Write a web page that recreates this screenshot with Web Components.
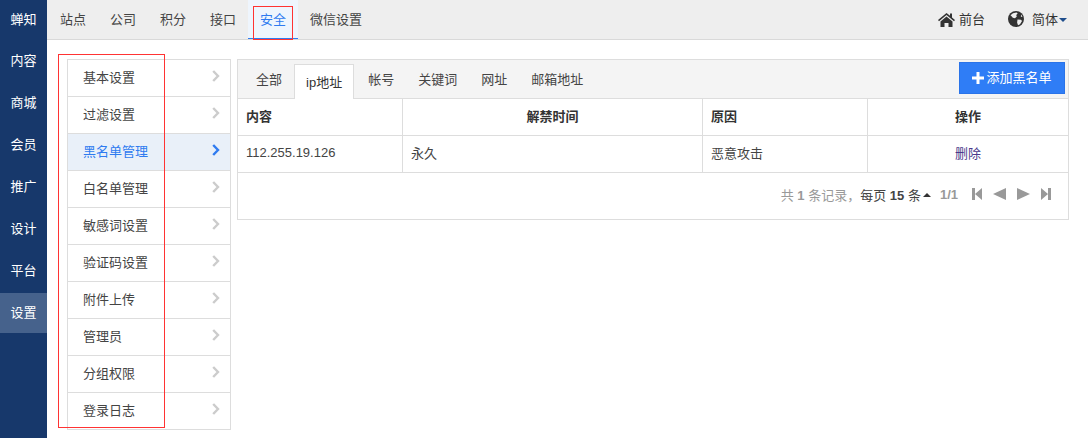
<!DOCTYPE html>
<html lang="zh">
<head>
<meta charset="utf-8">
<title>黑名单管理</title>
<style>
  html, body { margin: 0; height: 100%; }
  body {
    background: #fff;
    font-family: "Liberation Sans", "Noto Sans CJK SC", sans-serif;
    font-size: 13px;
    color: #444;
    overflow: hidden;
  }
  #app { display: flex; width: 1088px; height: 438px; position: relative; }
  #main { flex: 1; display: flex; flex-direction: column; min-width: 0; }
  #body { display: flex; gap: 6px; padding: 19px 19px 0 20px; align-items: flex-start; }
</style>
</head>
<body>
<div id="app">
  <side-bar active="设置">
    <side-item first>蝉知</side-item>
    <side-item>内容</side-item>
    <side-item>商城</side-item>
    <side-item>会员</side-item>
    <side-item>推广</side-item>
    <side-item>设计</side-item>
    <side-item>平台</side-item>
    <side-item active>设置</side-item>
  </side-bar>
  <div id="main">
    <top-bar></top-bar>
    <div id="body">
      <menu-list>
        <menu-row>基本设置</menu-row>
        <menu-row>过滤设置</menu-row>
        <menu-row active>黑名单管理</menu-row>
        <menu-row>白名单管理</menu-row>
        <menu-row>敏感词设置</menu-row>
        <menu-row>验证码设置</menu-row>
        <menu-row>附件上传</menu-row>
        <menu-row>管理员</menu-row>
        <menu-row>分组权限</menu-row>
        <menu-row>登录日志</menu-row>
      </menu-list>
      <black-panel></black-panel>
    </div>
  </div>
  <note-box style="left:253px;top:6px;width:38px;height:32px"></note-box>
  <note-box style="left:58px;top:54px;width:105px;height:372px"></note-box>
</div>

<template id="top-bar-tpl">
  <style>
    :host { display: flex; align-items: stretch; height: 39px; background: #eee; border-bottom: 1px solid #d9d9d9; padding-left: 1px; color: #444; }
    a { display: flex; align-items: center; justify-content: center; width: 50px; height: 39px; box-sizing: border-box; padding-bottom: 3px; }
    a.on { color: #2f7bf0; background: #eef5fd; border-bottom: 1px solid #2f7bf0; padding-bottom: 2px; }
    a.wide { width: 76px; }
    .right { margin-left: auto; display: flex; align-items: center; color: #333; padding-bottom: 3px; }
    .right span { display: flex; align-items: center; }
    .home { gap: 4px; margin-right: 23px; }
    .lang { gap: 8px; margin-right: 21px; }
    .caret { width: 0; height: 0; border: 4px solid transparent; border-top-color: #1f4e8c; border-bottom: 0; margin-left: 1px; margin-top: 3px; }
    svg { display: block; margin-top: 2px; }
  </style>
  <a>站点</a><a>公司</a><a>积分</a><a>接口</a><a class="on">安全</a><a class="wide">微信设置</a>
  <div class="right">
    <span class="home">
      <svg width="17" height="15" viewBox="0 0 17 15"><path fill="#333" d="M8.5 1 0 8l1 1.2L8.5 3 16 9.2 17 8l-3-2.5V1.5h-2v2.3L8.500 1zM2.500 9.500V15h4v-4h4v4h4V9.500L8.500 4.500z"/></svg>
      前台
    </span>
    <span class="lang">
      <svg width="16" height="16" viewBox="0 0 16 16"><circle cx="8" cy="8" r="8" fill="#333"/><path fill="#eee" d="M2.500 4.200 5 2.200l3.500-.8 1.200 1.200-1.500 1.500.6 1.400-1.800 1.800-2.200-.6-1-1.200zM9.500 8.500l3.500.2 1 1.300-2 3.200-2 1-.9-2.700zM13 3.500l1.500 2-1.600.6z"/></svg>
      <span>简体<i class="caret"></i></span>
    </span>
  </div>
</template>

<template id="black-panel-tpl">
  <style>
    :host { display: block; width: 832px; height: 161px; box-sizing: border-box; border: 1px solid #ddd; background: #fff; }
    .tabs { display: flex; height: 39px; box-sizing: border-box; background: #f4f4f4; border-bottom: 1px solid #ddd; padding: 4px 3px 0 0; align-items: flex-start; }
    .tab { padding: 0 12px 6px; height: 34px; box-sizing: border-box; display: flex; align-items: center; color: #444; }
    .tab:first-child { padding-left: 18px; }
    .tab.on { height: 35px; background: #fff; border: 1px solid #ddd; border-bottom: 0; padding: 0 11px 2px; color: #333; margin-right: 2px; }
    .add { margin-left: auto; margin-top: -2px; width: 106px; height: 32px; box-sizing: border-box; background: #2f7df6; border: 1px solid #2a73e8; color: #fff; display: flex; align-items: center; justify-content: center; gap: 2px; padding-bottom: 3px; }
    .add svg { margin-top: 2px; }
    table { width: 830px; border-collapse: separate; border-spacing: 0; table-layout: fixed; }
    th, td { height: 37px; padding: 0 8px 4px; box-sizing: border-box; border-bottom: 1px solid #ddd; border-right: 1px solid #ddd; text-align: left; font-weight: normal; color: #444; }
    th { font-weight: bold; color: #333; }
    th:last-child, td:last-child { border-right: 0; }
    .c { text-align: center; }
    td a { color: #4a3a8c; }
    .pager { display: flex; justify-content: flex-end; align-items: center; height: 46px; box-sizing: border-box; padding: 0 17px 4px 0; color: #999; }
    .pager b { font-weight: bold; }
    .comma { font-family: "Noto Sans CJK TC", sans-serif; }
    .dark { color: #444; }
    .up { width: 0; height: 0; border: 4px solid transparent; border-bottom-color: #333; border-top: 0; margin: 2px 9px 0 2px; }
    .count { font-weight: bold; color: #999; margin-right: 14px; }
    .pager svg { display: block; margin-left: 11px; }
    .pager svg:first-of-type { margin-left: 0; }
  </style>
  <div class="tabs">
    <div class="tab">全部</div>
    <div class="tab on">ip地址</div>
    <div class="tab">帐号</div>
    <div class="tab">关键词</div>
    <div class="tab">网址</div>
    <div class="tab">邮箱地址</div>
    <div class="add">
      <svg width="12" height="12" viewBox="0 0 12 12"><path fill="#fff" d="M4.500 0h3v4.500H12v3H7.500V12h-3V7.500H0v-3h4.500z"/></svg>
      添加黑名单
    </div>
  </div>
  <table>
    <colgroup><col style="width:165px"><col style="width:300px"><col style="width:165px"><col style="width:200px"></colgroup>
    <tr><th>内容</th><th class="c">解禁时间</th><th>原因</th><th class="c">操作</th></tr>
    <tr><td>112.255.19.126</td><td>永久</td><td>恶意攻击</td><td class="c"><a>删除</a></td></tr>
  </table>
  <div class="pager">
    <span>共 <b>1</b> 条记录<span class="comma">，</span></span><span class="dark">每页 <b>15</b> 条</span><i class="up"></i>
    <span class="count">1/1</span>
    <svg width="10" height="12" viewBox="0 0 10 12"><path fill="#999" d="M0 0h3v12H0zM10 0v12L3 6z"/></svg>
    <svg width="13" height="12" viewBox="0 0 13 12"><path fill="#999" d="M13 0v12L0 6z"/></svg>
    <svg width="13" height="12" viewBox="0 0 13 12"><path fill="#999" d="M0 0v12l13-6z"/></svg>
    <svg width="10" height="12" viewBox="0 0 10 12"><path fill="#999" d="M7 0h3v12H7zM0 0v12l7-6z"/></svg>
  </div>
</template>

<script>
function shadow(el, css, html) {
  el.attachShadow({ mode: "open" }).innerHTML = "<style>" + css + "</style>" + html;
}

customElements.define("side-bar", class extends HTMLElement {
  constructor() {
    super();
    shadow(this, ":host { display: block; width: 47px; flex: none; background: #17386b; }", "<slot></slot>");
  }
});

customElements.define("side-item", class extends HTMLElement {
  constructor() {
    super();
    shadow(this, `
      :host { display: flex; align-items: center; justify-content: center; height: 42px; box-sizing: border-box; padding-bottom: 2px; color: #fff; }
      :host([first]) { height: 39px; padding-bottom: 2px; }
      :host([active]) { background: linear-gradient(#17386b 2px, #46628c 2px); padding-bottom: 1px; }
    `, "<slot></slot>");
  }
});

customElements.define("top-bar", class extends HTMLElement {
  constructor() {
    super();
    this.attachShadow({ mode: "open" }).appendChild(document.getElementById("top-bar-tpl").content.cloneNode(true));
  }
});

customElements.define("menu-list", class extends HTMLElement {
  constructor() {
    super();
    shadow(this, ":host { display: block; width: 164px; flex: none; border: 1px solid #ddd; border-bottom: 0; box-sizing: border-box; }", "<slot></slot>");
  }
});

customElements.define("menu-row", class extends HTMLElement {
  constructor() {
    super();
    shadow(this, `
      :host { display: flex; align-items: center; justify-content: space-between; height: 37px; box-sizing: border-box; border-bottom: 1px solid #ddd; padding: 0 10px 4px 15px; color: #444; }
      :host([active]) { background: #e9f0f9; color: #2f7bf0; }
      svg { display: block; color: #ccc; }
      :host([active]) svg { color: #2f7bf0; }
    `, `<slot></slot><svg width="8" height="12" viewBox="0 0 8 12"><path fill="none" stroke="currentColor" stroke-width="2.400" d="M1.200 1 6 6l-4.800 5"/></svg>`);
  }
});

customElements.define("black-panel", class extends HTMLElement {
  constructor() {
    super();
    this.attachShadow({ mode: "open" }).appendChild(document.getElementById("black-panel-tpl").content.cloneNode(true));
  }
});

// red review marks drawn over the screenshot
customElements.define("note-box", class extends HTMLElement {
  constructor() {
    super();
    shadow(this, ":host { display: block; position: absolute; border: 1px solid #f33; box-sizing: content-box; pointer-events: none; }", "");
  }
});
</script>
</body>
</html>
